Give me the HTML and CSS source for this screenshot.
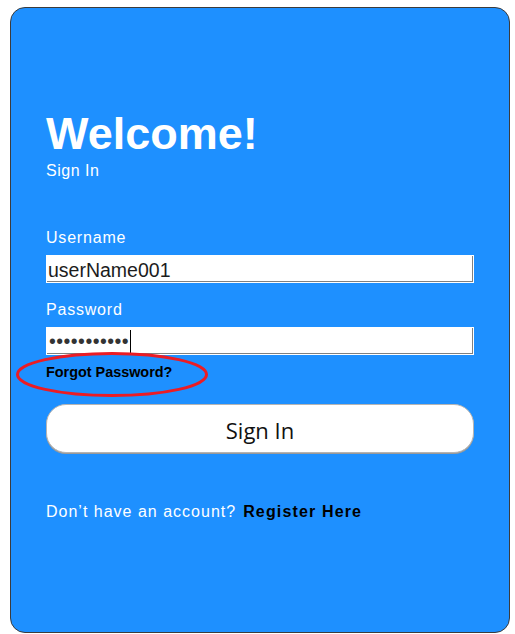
FILE: index.html
```html
<!DOCTYPE html>
<html lang="en">
<head>
<meta charset="utf-8">
<title>Welcome! Sign In</title>
<link rel="stylesheet" href="styles.css">
</head>
<body>
<main class="card">
  <h1 class="title">Welcome!</h1>
  <p class="subtitle">Sign In</p>

  <label class="label label-first">Username</label>
  <div class="field"><span class="field-text">userName001</span></div>

  <label class="label">Password</label>
  <div class="field"><span class="field-dots">•••••••••••</span><span class="caret"></span></div>

  <div class="forgot-row">
    <a class="forgot">Forgot Password?</a>
    <svg class="circle-mark" width="194" height="47" viewBox="0 0 194 47" aria-hidden="true">
      <ellipse cx="97" cy="23.5" rx="94.5" ry="21" fill="none" stroke="#ec1c24" stroke-width="3"/>
    </svg>
  </div>

  <button class="signin-btn">Sign In</button>

  <p class="register">Don’t have an account?<a class="register-link">Register Here</a></p>
</main>
</body>
</html>
```

FILE: styles.css
```css
html, body {
  margin: 0;
  padding: 0;
  background: #ffffff;
}

body {
  font-family: "Liberation Sans", Arial, sans-serif;
}

.card {
  box-sizing: border-box;
  width: 500px;
  height: 626px;
  margin: 7px 0 0 10px;
  padding: 100px 35px 0 35px;
  background: #1e90ff;
  border: 1px solid #3c3c3c;
  border-radius: 15px;
  display: flex;
  flex-direction: column;
  align-items: stretch;
}

.title {
  margin: 0;
  font-size: 45px;
  line-height: 52px;
  font-weight: bold;
  color: #ffffff;
}

.subtitle {
  margin: 1px 0 0 0;
  font-size: 16px;
  line-height: 20px;
  letter-spacing: 0.5px;
  color: #ffffff;
}

.label {
  display: block;
  margin-top: 17px;
  font-size: 16px;
  line-height: 20px;
  letter-spacing: 0.8px;
  color: #ffffff;
}

.label-first {
  margin-top: 47px;
}

.field {
  box-sizing: border-box;
  margin-top: 7px;
  height: 28px;
  background: #ffffff;
  border: 1px solid #ffffff;
  box-shadow: inset -1px -1px 0 #808080;
  display: flex;
  align-items: center;
  padding-left: 1px;
}

.field-text {
  font-size: 19.5px;
  line-height: 22px;
  color: #1c1c1c;
  padding-top: 1px;
}

.field-dots {
  font-size: 19.5px;
  line-height: 22px;
  letter-spacing: 0.45px;
  color: #333333;
  padding-left: 1px;
}

.caret {
  width: 1px;
  height: 23px;
  background: #000000;
  margin-left: 1px;
}

.forgot-row {
  position: relative;
  margin-top: 8px;
  height: 18px;
}

.forgot {
  font-size: 14.4px;
  line-height: 18px;
  font-weight: bold;
  color: #000000;
}

.circle-mark {
  position: absolute;
  left: -31px;
  top: -12px;
}

.signin-btn {
  box-sizing: border-box;
  margin-top: 23px;
  height: 49px;
  width: 100%;
  background: #ffffff;
  border: 1px solid #b4b4b4;
  border-radius: 20px;
  box-shadow: 0 1px 0 #9a9a9a;
  font-family: "Open Sans", "Segoe UI", sans-serif;
  font-size: 22px;
  color: #111111;
  padding: 3px 0 0 0;
  cursor: pointer;
}

.register {
  margin: 49px 0 0 0;
  font-size: 16px;
  line-height: 20px;
  letter-spacing: 1px;
  color: #ffffff;
}

.register-link {
  margin-left: 7px;
  font-weight: bold;
  letter-spacing: 1.15px;
  color: #000000;
}
```
